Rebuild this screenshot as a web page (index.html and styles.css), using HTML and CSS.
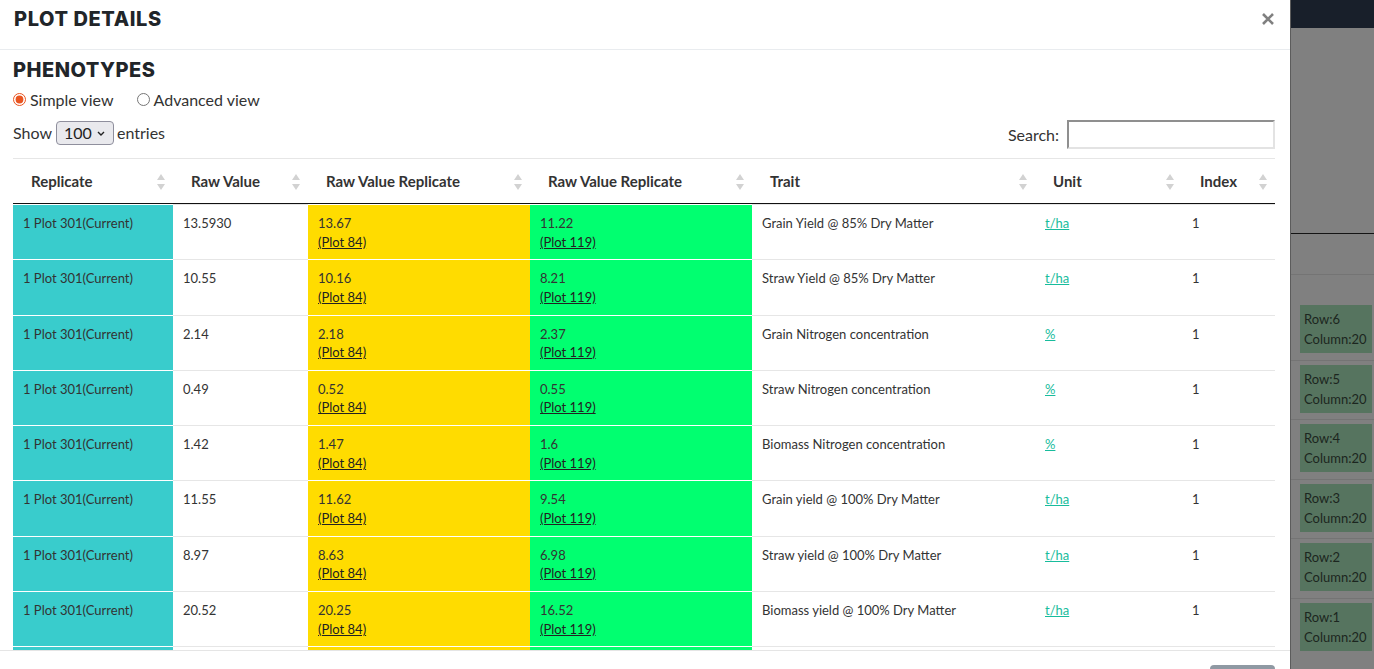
FILE: index.html
```html
<!DOCTYPE html>
<html lang="en">
<head>
<meta charset="utf-8">
<title>Plot details</title>
<link rel="stylesheet" href="styles.css">
</head>
<body>
<div class="page">
  <div class="modal">
    <div class="modal-header">
      <h4 class="modal-title">PLOT DETAILS</h4>
      <button class="close" aria-label="Close">
        <svg width="12" height="12" viewBox="0 0 12 12"><path d="M1 1 L11 11 M11 1 L1 11" stroke="#808080" stroke-width="2.6" stroke-linecap="butt"/></svg>
      </button>
    </div>
    <div class="modal-body">
      <h3 class="section-title">PHENOTYPES</h3>
      <div class="views">
        <label class="view"><input type="radio" name="view" checked>Simple view</label>
        <label class="view"><input type="radio" name="view">Advanced view</label>
      </div>
      <div class="controls">
        <div class="length">
          <span>Show</span>
          <span class="select-wrap">
            <select class="select"><option>100</option></select>
            <svg class="chev" width="8" height="5" viewBox="0 0 8 5"><path d="M1 1 L4 4 L7 1" fill="none" stroke="#222" stroke-width="1.4"/></svg>
          </span>
          <span>entries</span>
        </div>
        <div class="search">
          <label>Search:</label>
          <input type="search" class="search-input">
        </div>
      </div>
      <table class="grid">
        <colgroup>
          <col style="width:160px"><col style="width:135px"><col style="width:222px"><col style="width:222px"><col style="width:283px"><col style="width:147px"><col style="width:93px">
        </colgroup>
        <thead>
          <tr>
            <th><div class="th"><span>Replicate</span><svg class="sort" width="8" height="16" viewBox="0 0 8 16"><path d="M0 6 L4 0 L8 6Z M0 10 L4 16 L8 10Z" fill="#d2d2d2"/></svg></div></th>
            <th><div class="th"><span>Raw Value</span><svg class="sort" width="8" height="16" viewBox="0 0 8 16"><path d="M0 6 L4 0 L8 6Z M0 10 L4 16 L8 10Z" fill="#d2d2d2"/></svg></div></th>
            <th><div class="th"><span>Raw Value Replicate</span><svg class="sort" width="8" height="16" viewBox="0 0 8 16"><path d="M0 6 L4 0 L8 6Z M0 10 L4 16 L8 10Z" fill="#d2d2d2"/></svg></div></th>
            <th><div class="th"><span>Raw Value Replicate</span><svg class="sort" width="8" height="16" viewBox="0 0 8 16"><path d="M0 6 L4 0 L8 6Z M0 10 L4 16 L8 10Z" fill="#d2d2d2"/></svg></div></th>
            <th><div class="th"><span>Trait</span><svg class="sort" width="8" height="16" viewBox="0 0 8 16"><path d="M0 6 L4 0 L8 6Z M0 10 L4 16 L8 10Z" fill="#d2d2d2"/></svg></div></th>
            <th><div class="th"><span>Unit</span><svg class="sort" width="8" height="16" viewBox="0 0 8 16"><path d="M0 6 L4 0 L8 6Z M0 10 L4 16 L8 10Z" fill="#d2d2d2"/></svg></div></th>
            <th><div class="th"><span>Index</span><svg class="sort" width="8" height="16" viewBox="0 0 8 16"><path d="M0 6 L4 0 L8 6Z M0 10 L4 16 L8 10Z" fill="#d2d2d2"/></svg></div></th>
          </tr>
        </thead>
        <tbody>
          <tr>
            <td class="c-cur">1 Plot 301(Current)</td><td>13.5930</td>
            <td class="c-yel">13.67<br><a href="#" class="plot">(Plot 84)</a></td>
            <td class="c-grn">11.22<br><a href="#" class="plot">(Plot 119)</a></td>
            <td>Grain Yield @ 85% Dry Matter</td><td><a href="#" class="unit">t/ha</a></td><td>1</td>
          </tr>
          <tr>
            <td class="c-cur">1 Plot 301(Current)</td><td>10.55</td>
            <td class="c-yel">10.16<br><a href="#" class="plot">(Plot 84)</a></td>
            <td class="c-grn">8.21<br><a href="#" class="plot">(Plot 119)</a></td>
            <td>Straw Yield @ 85% Dry Matter</td><td><a href="#" class="unit">t/ha</a></td><td>1</td>
          </tr>
          <tr>
            <td class="c-cur">1 Plot 301(Current)</td><td>2.14</td>
            <td class="c-yel">2.18<br><a href="#" class="plot">(Plot 84)</a></td>
            <td class="c-grn">2.37<br><a href="#" class="plot">(Plot 119)</a></td>
            <td>Grain Nitrogen concentration</td><td><a href="#" class="unit">%</a></td><td>1</td>
          </tr>
          <tr>
            <td class="c-cur">1 Plot 301(Current)</td><td>0.49</td>
            <td class="c-yel">0.52<br><a href="#" class="plot">(Plot 84)</a></td>
            <td class="c-grn">0.55<br><a href="#" class="plot">(Plot 119)</a></td>
            <td>Straw Nitrogen concentration</td><td><a href="#" class="unit">%</a></td><td>1</td>
          </tr>
          <tr>
            <td class="c-cur">1 Plot 301(Current)</td><td>1.42</td>
            <td class="c-yel">1.47<br><a href="#" class="plot">(Plot 84)</a></td>
            <td class="c-grn">1.6<br><a href="#" class="plot">(Plot 119)</a></td>
            <td>Biomass Nitrogen concentration</td><td><a href="#" class="unit">%</a></td><td>1</td>
          </tr>
          <tr>
            <td class="c-cur">1 Plot 301(Current)</td><td>11.55</td>
            <td class="c-yel">11.62<br><a href="#" class="plot">(Plot 84)</a></td>
            <td class="c-grn">9.54<br><a href="#" class="plot">(Plot 119)</a></td>
            <td>Grain yield @ 100% Dry Matter</td><td><a href="#" class="unit">t/ha</a></td><td>1</td>
          </tr>
          <tr>
            <td class="c-cur">1 Plot 301(Current)</td><td>8.97</td>
            <td class="c-yel">8.63<br><a href="#" class="plot">(Plot 84)</a></td>
            <td class="c-grn">6.98<br><a href="#" class="plot">(Plot 119)</a></td>
            <td>Straw yield @ 100% Dry Matter</td><td><a href="#" class="unit">t/ha</a></td><td>1</td>
          </tr>
          <tr>
            <td class="c-cur">1 Plot 301(Current)</td><td>20.52</td>
            <td class="c-yel">20.25<br><a href="#" class="plot">(Plot 84)</a></td>
            <td class="c-grn">16.52<br><a href="#" class="plot">(Plot 119)</a></td>
            <td>Biomass yield @ 100% Dry Matter</td><td><a href="#" class="unit">t/ha</a></td><td>1</td>
          </tr>
          <tr class="tail">
            <td class="c-cur"></td><td></td>
            <td class="c-yel"></td>
            <td class="c-grn"></td>
            <td></td><td></td><td></td>
          </tr>
        </tbody>
      </table>
    </div>
    <div class="modal-footer">
      <button class="btn" aria-label="Close"></button>
    </div>
  </div>
  <div class="backdrop">
    <div class="nav"></div>
    <div class="bd-top"></div>
    <div class="bd-head"></div>
    <div class="bd-rows">
      <div class="bd-row"><div class="card">Row:6<br>Column:20</div></div>
      <div class="bd-row"><div class="card">Row:5<br>Column:20</div></div>
      <div class="bd-row"><div class="card">Row:4<br>Column:20</div></div>
      <div class="bd-row"><div class="card">Row:3<br>Column:20</div></div>
      <div class="bd-row"><div class="card">Row:2<br>Column:20</div></div>
      <div class="bd-row"><div class="card">Row:1<br>Column:20</div></div>
    </div>
  </div>
</div>
</body>
</html>
```
FILE: styles.css
```css
* { box-sizing: border-box; }
html, body { margin: 0; padding: 0; height: 100%; }
body {
  font-family: Lato, "Liberation Sans", sans-serif;
  color: #333;
  background: #808080;
  overflow: hidden;
}
.page { display: flex; height: 669px; overflow: hidden; }

/* modal */
.modal {
  width: 1290px;
  flex: none;
  background: #fff;
  display: flex;
  flex-direction: column;
  height: 669px;
  overflow: hidden;
}
.modal-header {
  height: 50px;
  flex: none;
  border-bottom: 1px solid #e9ecef;
  display: flex;
  justify-content: space-between;
  align-items: flex-start;
  padding: 7px 14px 0 14px;
}
.modal-title {
  margin: 0;
  font: 800 20px/24px Inter, "DejaVu Sans", sans-serif;
  color: #212529;
  letter-spacing: 0.6px;
}
.close {
  border: 0;
  background: none;
  padding: 0;
  margin: 6px 2px 0 0;
  width: 12px;
  height: 12px;
  display: block;
  cursor: pointer;
}
.close svg { display: block; }

.modal-body {
  height: 600px;
  flex: none;
  overflow: hidden;
  padding: 8px 15px 0 13px;
}
.section-title {
  margin: 0;
  font: 800 20px/24px Inter, "DejaVu Sans", sans-serif;
  color: #212529;
  letter-spacing: 0.5px;
}
.views {
  display: flex;
  gap: 23px;
  margin-top: 6px;
  height: 22px;
  align-items: center;
  font-size: 16px;
  color: #333;
}
.view { display: flex; align-items: center; }
.view input {
  margin: 0 4px 0 0;
  width: 13px;
  height: 13px;
  accent-color: #e95420;
}
.controls {
  display: flex;
  justify-content: space-between;
  align-items: center;
  margin-top: 8px;
  height: 29px;
  font-size: 16px;
  color: #333;
}
.length { display: flex; align-items: center; }
.select-wrap { position: relative; display: inline-block; margin: 0 3px 0 4px; }
.select {
  appearance: none;
  -webkit-appearance: none;
  width: 58px;
  height: 24px;
  border: 1px solid #8f8f9d;
  border-radius: 4px;
  background: #e9e9ed;
  font: 16px Lato, sans-serif;
  color: #222;
  padding: 0 0 0 7px;
  display: block;
}
.chev { position: absolute; right: 9px; top: 10px; pointer-events: none; }
.search { display: flex; align-items: center; gap: 8px; padding-top: 3px; }
.search-input {
  width: 208px;
  height: 29px;
  border: 2px solid;
  border-color: #8f8f8f #e3e3e3 #e3e3e3 #8f8f8f;
  background: #fff;
  font: 15px Lato, sans-serif;
  margin: 0;
}

/* table */
.grid {
  width: 1262px;
  table-layout: fixed;
  border-collapse: separate;
  border-spacing: 0;
  margin-top: 11px;
  border-top: 1px solid #e6e6e6;
}
.grid th {
  padding: 12px 8px 11px 18px;
  border-bottom: 1px solid #111;
  font-size: 15px;
  line-height: 21px;
  font-weight: 700;
  color: #333;
  text-align: left;
}
.th { display: flex; justify-content: space-between; align-items: center; }
.th span { white-space: nowrap; }
.sort { display: block; flex: none; }
.grid td {
  border-top: 1px solid #e6e6e6;
  padding: 9px 10px 8px 10px;
  font-size: 13px;
  line-height: 18.6px;
  height: 55.3px;
  vertical-align: top;
  color: #333;
}
.grid td.c-cur { background: #39cccc; border-top-color: #fff; }
.grid td.c-yel { background: #ffdc00; border-top-color: #fff; }
.grid td.c-grn { background: #01ff70; border-top-color: #fff; }
.plot { color: #222; text-decoration: underline; }
.unit { color: #18bc9c; text-decoration: underline; }

.modal-footer {
  flex: none;
  border-top: 1px solid #e5e5e5;
  padding: 14px 15px 14px 15px;
  display: flex;
  justify-content: flex-end;
}
.btn {
  width: 65px;
  height: 36px;
  border: 0;
  border-radius: 4px;
  background: #8f99a3;
}

/* backdrop page */
.backdrop {
  flex: 1;
  border-left: 1px solid #5c5c5c;
  background: #808080;
  display: flex;
  flex-direction: column;
}
.nav { height: 28px; background: #181f2a; flex: none; }
.bd-top { height: 206px; border-bottom: 1px solid #141414; flex: none; }
.bd-head { height: 41px; border-bottom: 1px solid #747474; flex: none; }
.bd-rows { padding-top: 25px; }
.bd-row { border-top: 1px solid #747474; padding: 4px 0 6.5px 9px; }
.bd-row:first-child { border-top-color: transparent; }
.card {
  width: 72px;
  height: 48px;
  background: #56745f;
  padding: 4px;
  font-size: 13px;
  line-height: 20px;
  color: #1c2620;
  white-space: nowrap;
  overflow: hidden;
}
```
